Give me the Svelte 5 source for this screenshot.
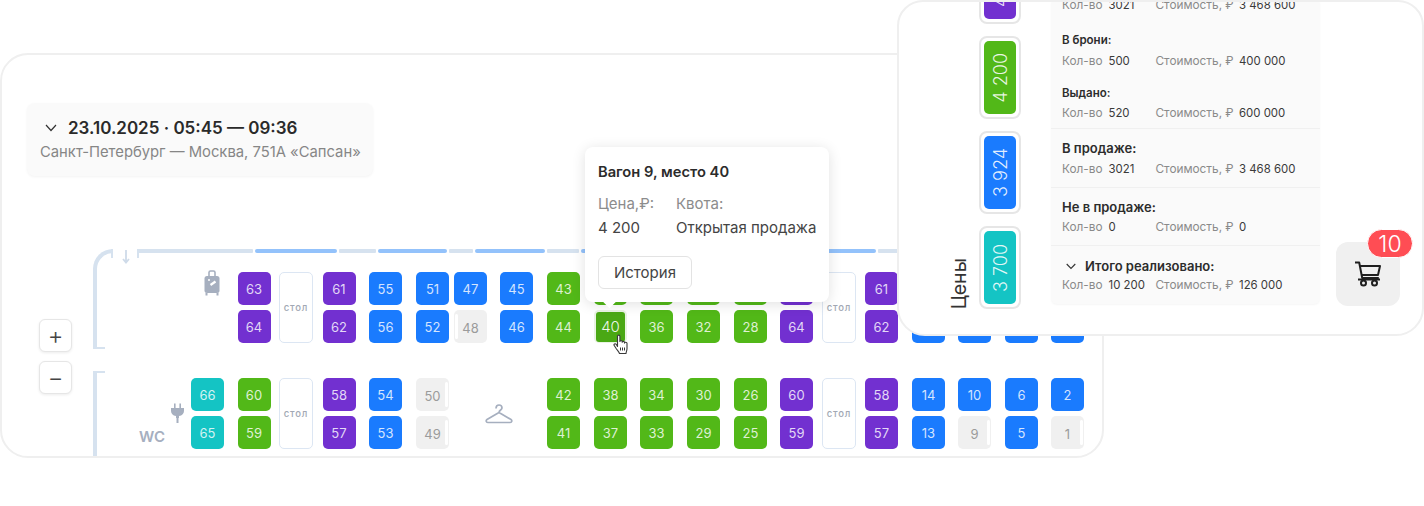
<script>
  // схема вагона: колонки слева направо, в каждой верхнее и нижнее место
  const P = "purple", B = "blue", G = "green", T = "teal", F = "free";

  const upper = [
    { icon: "bag" },
    { seats: [[63, P], [64, P]] },
    { table: true },
    { seats: [[61, P], [62, P]] },
    { seats: [[55, B], [56, B]] },
    { seats: [[51, B], [52, B]] },
    { seats: [[47, B], [48, F, "left"]] },
    { seats: [[45, B], [46, B]] },
    { seats: [[43, G], [44, G]] },
    { seats: [[39, G], [40, G, "active"]] },
    { seats: [[35, G], [36, G]] },
    { seats: [[31, G], [32, G]] },
    { seats: [[27, G], [28, G]] },
    { seats: [[63, P], [64, P]] },
    { table: true },
    { seats: [[61, P], [62, P]] },
    { seats: [[15, B], [16, B]] },
    { seats: [[11, B], [12, B]] },
    { seats: [[7, B], [8, B]] },
    { seats: [[3, B], [4, B]] }
  ];

  const lower = [
    { seats: [[66, T], [65, T]] },
    { seats: [[60, G], [59, G]] },
    { table: true },
    { seats: [[58, P], [57, P]] },
    { seats: [[54, B], [53, B]] },
    { seats: [[50, F, "right"], [49, F, "right"]] },
    { hanger: true },
    { seats: [[42, G], [41, G]] },
    { seats: [[38, G], [37, G]] },
    { seats: [[34, G], [33, G]] },
    { seats: [[30, G], [29, G]] },
    { seats: [[26, G], [25, G]] },
    { seats: [[60, P], [59, P]] },
    { table: true },
    { seats: [[58, P], [57, P]] },
    { seats: [[14, B], [13, B]] },
    { seats: [[10, B], [9, F, "right"]] },
    { seats: [[6, B], [5, B]] },
    { seats: [[2, B], [1, F, "right"]] }
  ];

  const bar = [
    [116, 0], [82, 1], [37, 0], [69, 1], [24, 0], [70, 1], [32, 0], [69, 1],
    [33, 0], [70, 1], [32, 0], [83, 1], [120, 0]
  ];

  const prices = [
    { label: "4 500", color: P },
    { label: "4 200", color: G },
    { label: "3 924", color: B },
    { label: "3 700", color: T }
  ];
</script>

{#snippet seat(s)}
  <div class="seat {s[1]} {s[2] || ''}">
    {#if s[2] === "active"}<span class="inner">{s[0]}</span>{:else}{s[0]}{/if}
  </div>
{/snippet}

<main class="page">
  <section class="card">
    <div class="trip">
      <div class="trip-title">
        <svg class="chev" width="12" height="8" viewBox="0 0 12 8"><polyline points="1,1 6,6.5 11,1" fill="none" stroke="#333" stroke-width="1.2" /></svg>
        23.10.2025 · 05:45 — 09:36
      </div>
      <div class="trip-sub">Санкт-Петербург — Москва, 751А «Сапсан»</div>
    </div>

    <div class="map">
      <div class="half">
        <div class="wall top"></div>
        <div class="body">
          <div class="line">
            <svg class="arrow" width="8" height="14" viewBox="0 0 8 14"><path d="M4 0v12M1 9l3 3.5L7 9" fill="none" stroke="#cfdbe9" stroke-width="1.8" /></svg>
            <div class="bar">
              {#each bar as b}
                <i class:on={b[1]} style="width: {b[0]}px"></i>
              {/each}
            </div>
          </div>
          <div class="deck">
            {#each upper as col}
              {#if col.icon}
                <div class="side">
                  <svg class="bag" width="16" height="26" viewBox="0 0 16 26">
                    <path d="M5 6V2.500C5 1.500 5.700 1 6.500 1h3c.8 0 1.500.5 1.500 1.500V6" fill="none" stroke="#a6afbf" stroke-width="1.600" />
                    <rect x="0.500" y="6" width="15" height="17" rx="2.500" fill="#a6afbf" />
                    <path d="M2.500 23v2.500M13.500 23v2.500" stroke="#a6afbf" stroke-width="2" />
                    <path d="M6.500 15l5-3.500" stroke="#fff" stroke-width="2.200" />
                    <circle cx="5" cy="10" r="1" fill="#fff" />
                  </svg>
                </div>
              {:else if col.table}
                <div class="table">стол</div>
              {:else}
                {@render seat(col.seats[0])}
                {@render seat(col.seats[1])}
              {/if}
            {/each}
          </div>
        </div>
      </div>

      <div class="half low">
        <div class="wall bottom"></div>
        <div class="body">
          <div class="deck">
            <div class="side end">
              <svg class="plug" width="13" height="20" viewBox="0 0 13 20">
                <path d="M3 0.500h1.600V5h3.800V0.500H10V5h3v3c0 2.600-1.800 4.600-5 5v2H5v-2C1.800 12.600 0 10.600 0 8V5h3z" fill="#a6afbf" />
                <rect x="5.500" y="15" width="2" height="5" fill="#a6afbf" />
              </svg>
              <span class="wc">WC</span>
            </div>
            {#each lower as col}
              {#if col.hanger}
                <div class="hanger">
                  <svg width="28" height="20" viewBox="0 0 28 20">
                    <path d="M11 4.500C11 2.500 12.400 1 14 1s3 1.300 3 3c0 1.800-3 2.300-3 4.500L2 15.500c-1.300.9-1 3 .8 3h22.400c1.800 0 2.100-2.100.8-3L14 8.500" fill="none" stroke="#a6afbf" stroke-width="1.700" />
                  </svg>
                </div>
              {:else if col.table}
                <div class="table">стол</div>
              {:else}
                {@render seat(col.seats[0])}
                {@render seat(col.seats[1])}
              {/if}
            {/each}
          </div>
        </div>
      </div>
    </div>

    <div class="zoom">
      <button class="zoom-btn">+</button>
      <button class="zoom-btn">−</button>
    </div>

    <div class="tooltip">
      <h3>Вагон 9, место 40</h3>
      <div class="tip-cols">
        <div>
          <p class="muted">Цена,₽:</p>
          <p>4 200</p>
        </div>
        <div>
          <p class="muted">Квота:</p>
          <p>Открытая продажа</p>
        </div>
      </div>
      <button class="history">История</button>
    </div>

    <svg class="hand" width="17" height="21" viewBox="0 0 17 21">
      <path d="M4.500 12.500V2.300c0-1.600 2.400-1.600 2.400 0v5.200c0-1.300 2.300-1.300 2.300 0v.8c0-1.300 2.300-1.300 2.300 0v.8c0-1.200 2.500-1.200 2.500.2v5.200c0 2.400-1 3.500-1 5H6.500c-.4-1.500-2-3-3.500-5.200L1.200 11.500c-.8-1.300 1-2.500 2-1.200z" fill="#fff" stroke="#3a3a3a" stroke-width="1.100" stroke-linejoin="round" />
      <path d="M7.500 13.500v3M9.500 13.500v3M11.500 13.500v3" stroke="#3a3a3a" stroke-width="1" />
    </svg>
  </section>

  <aside class="panel">
    <div class="prices-title">Цены</div>
    <div class="prices">
      {#each prices as p}
        <div class="chip"><div class="chip-in {p.color}"><span>{p.label}</span></div></div>
      {/each}
    </div>

    <div class="stats">
      <div class="group sub">
        <div class="row"><span>Кол-во</span><b>3021</b><span>Стоимость, ₽</span><b>3 468 600</b></div>
        <h4 class="small first">В брони:</h4>
        <div class="row"><span>Кол-во</span><b>500</b><span>Стоимость, ₽</span><b>400 000</b></div>
        <h4 class="small">Выдано:</h4>
        <div class="row"><span>Кол-во</span><b>520</b><span>Стоимость, ₽</span><b>600 000</b></div>
      </div>
      <div class="group sale">
        <h4>В продаже:</h4>
        <div class="row"><span>Кол-во</span><b>3021</b><span>Стоимость, ₽</span><b>3 468 600</b></div>
      </div>
      <div class="group tight">
        <h4>Не в продаже:</h4>
        <div class="row"><span>Кол-во</span><b>0</b><span>Стоимость, ₽</span><b>0</b></div>
      </div>
      <div class="group last">
        <h4 class="total">
          <svg width="10" height="7" viewBox="0 0 10 7"><polyline points="0.700,1 5,5.500 9.300,1" fill="none" stroke="#333" stroke-width="1.100" /></svg>
          Итого реализовано:
        </h4>
        <div class="row"><span>Кол-во</span><b>10 200</b><span>Стоимость, ₽</span><b>126 000</b></div>
      </div>
    </div>

    <div class="cart">
      <svg width="28" height="26" viewBox="0 0 28 26">
        <path d="M1 1.500h4.200l3 15.500h16.600M6.300 5h19.700l-2 9H8" fill="none" stroke="#1f1f1f" stroke-width="2" stroke-linejoin="round" />
        <path d="M4 18.500h22" stroke="#1f1f1f" stroke-width="2" />
        <circle cx="9.500" cy="22" r="2.500" fill="none" stroke="#1f1f1f" stroke-width="2" />
        <circle cx="20.500" cy="22" r="2.500" fill="none" stroke="#1f1f1f" stroke-width="2" />
      </svg>
      <span class="badge">10</span>
    </div>
  </aside>
</main>

<style>
  :global(body) {
    background: #fff;
    font-family: Inter, "Noto Sans", sans-serif;
    color: #2b2b2b;
  }

  .page {
    position: relative;
    width: 1424px;
    height: 506px;
    overflow: hidden;
  }

  .card {
    position: relative;
    box-sizing: border-box;
    width: 1104px;
    height: 405px;
    margin-top: 53px;
    padding: 48px 0 0 25px;
    border: 2px solid #efefef;
    border-radius: 28px;
    overflow: hidden;
  }

  .trip {
    box-sizing: border-box;
    width: 346px;
    height: 73px;
    padding: 15px 0 0 13px;
    background: #fafafa;
    border-radius: 8px;
    box-shadow: 0 1px 3px rgba(0, 0, 0, 0.05);
  }

  .trip-title {
    display: flex;
    align-items: center;
    font-size: 17px;
    font-weight: 600;
    line-height: 20px;
    color: #2a2a2a;
  }

  .chev {
    margin: 0 11px 0 5px;
  }

  .trip-sub {
    margin-top: 6px;
    font-size: 14.800px;
    line-height: 17px;
    color: #868686;
  }

  .map {
    margin: 73px 0 0 66px;
  }

  .half {
    display: flex;
    height: 100px;
  }

  .low {
    margin-top: 22px;
    height: 90px;
  }

  .wall {
    position: relative;
    box-sizing: border-box;
    flex: none;
    width: 20px;
    border-left: 4px solid #d6e2ef;
  }

  .wall.top {
    height: 100px;
    border-top: 4px solid #d6e2ef;
    border-top-left-radius: 20px;
  }

  .wall.top::before {
    content: "";
    position: absolute;
    top: -4px;
    right: 0;
    width: 2px;
    height: 9px;
    background: #d6e2ef;
  }

  .wall.top::after {
    content: "";
    position: absolute;
    bottom: 0;
    left: 0;
    width: 8px;
    height: 2px;
    background: #d6e2ef;
  }

  .wall.bottom {
    height: 90px;
  }

  .wall.bottom::after {
    content: "";
    position: absolute;
    top: 0;
    left: 0;
    width: 8px;
    height: 2px;
    background: #d6e2ef;
  }

  .body {
    flex: none;
  }

  .line {
    display: flex;
    height: 23px;
  }

  .arrow {
    margin: 1px 7px 0 9px;
    flex: none;
  }

  .bar {
    display: flex;
    gap: 2px;
    height: 4px;
    position: relative;
  }

  .bar::before {
    content: "";
    position: absolute;
    left: 0;
    top: 0;
    width: 2px;
    height: 9px;
    background: #d6e2ef;
  }

  .bar i {
    display: block;
    flex: none;
    height: 4px;
    background: #d6e2ef;
    border-radius: 1px;
  }

  .bar i.on {
    background: #93c2fb;
    border-radius: 2px;
  }

  .deck {
    display: grid;
    grid-auto-flow: column;
    grid-template-rows: 33px 33px;
    row-gap: 5px;
    grid-template-columns: 124.500px 41.500px 43.500px 46.500px 47px 38px 46px 47px 47px 46px 47px 47px 46px 42px 43px 47px 46px 47px 46px 33px;
  }

  .low .deck {
    margin-top: 7px;
    grid-template-columns: 78px 46.500px 41.500px 43.500px 46.500px 47px 38px 46px 47px 47px 46px 47px 47px 46px 42px 43px 47px 46px 47px 46px 33px;
  }

  .side {
    grid-row: span 2;
    display: flex;
    justify-content: flex-end;
  }

  .bag {
    margin: -2px 18px 0 0;
  }

  .side.end {
    flex-direction: column;
    align-items: flex-end;
    justify-content: flex-start;
  }

  .plug {
    margin: 25px 7px 0 0;
  }

  .wc {
    margin: 5px 26px 0 0;
    font-size: 15px;
    font-weight: 600;
    line-height: 17px;
    color: #a6afbf;
  }

  .hanger {
    grid-row: span 2;
    grid-column: span 2;
    display: flex;
    align-items: center;
    justify-content: center;
    padding-right: 4px;
  }

  .seat {
    position: relative;
    box-sizing: border-box;
    width: 33px;
    height: 33px;
    display: flex;
    align-items: center;
    justify-content: center;
    border-radius: 5px;
    font-size: 13px;
    color: rgba(255, 255, 255, 0.82);
  }

  .purple { background: #7230d0; }
  .blue { background: #1a7bfe; }
  .green { background: #52b818; }
  .teal { background: #14c4c4; }

  .seat.free {
    background: #f0f0f0;
    color: #9b9b9b;
    padding-top: 2px;
  }

  .seat.free::after {
    content: "";
    position: absolute;
    top: 4px;
    bottom: 4px;
    width: 3px;
    background: #fff;
    border-radius: 2px;
  }

  .seat.left::after { left: 1px; }
  .seat.right::after { right: 1px; }

  .seat.active {
    background: #e9f3e3;
  }

  .inner {
    display: flex;
    align-items: center;
    justify-content: center;
    width: 29px;
    height: 30px;
    background: #4aa814;
    border-radius: 3px;
    font-size: 15px;
    font-weight: 300;
    color: rgba(255, 255, 255, 0.92);
  }

  .table {
    box-sizing: border-box;
    grid-row: span 2;
    width: 34px;
    display: flex;
    align-items: center;
    justify-content: center;
    border: 1.500px solid #dce6f3;
    border-radius: 5px;
    font-size: 9.500px;
    font-weight: 500;
    letter-spacing: 0.800px;
    color: #a2a8b4;
  }

  .zoom {
    position: absolute;
    left: 37px;
    top: 264px;
    display: flex;
    flex-direction: column;
    gap: 9px;
  }

  .zoom-btn {
    width: 33px;
    height: 33px;
    padding: 0;
    background: #fff;
    border: 1px solid #e6e6e6;
    border-radius: 6px;
    box-shadow: 0 1px 3px rgba(0, 0, 0, 0.08);
    font-family: Inter, sans-serif;
    font-size: 24px;
    font-weight: 300;
    line-height: 28px;
    color: #444;
  }

  .tooltip {
    position: absolute;
    left: 583px;
    top: 92px;
    box-sizing: border-box;
    width: 244px;
    height: 155px;
    padding: 15px 13px;
    background: #fff;
    border-radius: 8px;
    box-shadow: 0 2px 14px rgba(0, 0, 0, 0.12);
  }

  .tooltip::after {
    content: "";
    position: absolute;
    left: 19px;
    bottom: -4px;
    width: 11px;
    height: 11px;
    background: #fff;
    transform: rotate(45deg);
  }

  .tooltip h3 {
    margin: 0;
    font-size: 14.700px;
    font-weight: 600;
    line-height: 20px;
  }

  .tip-cols {
    display: flex;
    gap: 22px;
    margin-top: 10px;
    font-size: 15px;
    line-height: 24px;
    color: #444;
    white-space: nowrap;
  }

  .tip-cols p {
    margin: 0;
  }

  .tip-cols .muted {
    color: #8c8c8c;
  }

  .history {
    display: block;
    width: 94px;
    height: 33px;
    margin-top: 16px;
    padding: 0;
    background: #fff;
    border: 1.500px solid #e3e3e3;
    border-radius: 6px;
    font-family: Inter, sans-serif;
    font-size: 15px;
    color: #444;
  }

  .hand {
    position: absolute;
    left: 611px;
    top: 279px;
  }

  .panel {
    position: absolute;
    left: 897px;
    top: 0;
    box-sizing: border-box;
    width: 527px;
    height: 336px;
    display: flex;
    align-items: flex-end;
    background: #fff;
    border: 2px solid #efefef;
    border-radius: 26px 26px 28px 28px;
    overflow: hidden;
  }

  .prices-title {
    writing-mode: vertical-rl;
    transform: rotate(180deg);
    margin: 0 9px 25px 49px;
    font-size: 19.500px;
    line-height: 22px;
    color: #333;
  }

  .prices {
    display: flex;
    flex-direction: column;
    gap: 12px;
    margin-bottom: 25px;
  }

  .chip {
    box-sizing: border-box;
    width: 42px;
    height: 83px;
    padding: 3px;
    border: 2px solid #e6e6e6;
    border-radius: 8px;
  }

  .chip-in {
    width: 32px;
    height: 73px;
    display: flex;
    align-items: center;
    justify-content: center;
    border-radius: 5px;
    color: rgba(255, 255, 255, 0.88);
    font-size: 18px;
    font-weight: 300;
  }

  .chip-in span {
    writing-mode: vertical-rl;
    transform: rotate(180deg);
    white-space: nowrap;
  }

  .stats {
    flex: none;
    width: 269px;
    margin: 0 16px 30px 30px;
    background: #fafafa;
    border-radius: 6px;
    box-shadow: 0 1px 2px rgba(0, 0, 0, 0.04);
  }

  .group {
    padding: 11px 11px 10px;
    border-bottom: 1px solid #f0f0f0;
  }

  .group.sub {
    padding-top: 0;
    padding-bottom: 7.500px;
  }

  .group.last {
    border-bottom: 0;
    padding-top: 12px;
    padding-bottom: 11px;
  }

  .group h4 {
    margin: 0 0 3px;
    font-size: 13px;
    font-weight: 600;
    line-height: 17px;
    color: #2c2c2c;
  }

  .group.sale h4 {
    margin-bottom: 5px;
  }

  .group.tight h4 {
    margin-bottom: 4px;
  }

  .group h4.small {
    margin: 17px 0 5px;
    font-size: 11.500px;
    line-height: 15px;
  }

  .group h4.first {
    margin: 20px 0 6px;
  }

  .total {
    display: flex;
    align-items: center;
    gap: 9px;
    padding-left: 4px;
  }

  .row {
    display: grid;
    grid-template-columns: 46.500px 47px 83.500px 1fr;
    font-size: 11.800px;
    line-height: 15px;
    color: #8a8a8a;
  }

  .row b {
    font-size: 11.400px;
    font-weight: 400;
    color: #3a3a3a;
  }

  .cart {
    position: relative;
    flex: none;
    width: 64px;
    height: 64px;
    margin-bottom: 28px;
    display: flex;
    align-items: center;
    justify-content: center;
    background: #f0f0f0;
    border-radius: 12px;
  }

  .badge {
    position: absolute;
    right: -13px;
    top: -13px;
    box-sizing: border-box;
    width: 46px;
    height: 29px;
    display: flex;
    align-items: center;
    justify-content: center;
    background: #ff4d54;
    border: 1.500px solid #fff;
    border-radius: 15px;
    color: #fff;
    font-size: 23px;
    font-weight: 300;
  }
</style>
